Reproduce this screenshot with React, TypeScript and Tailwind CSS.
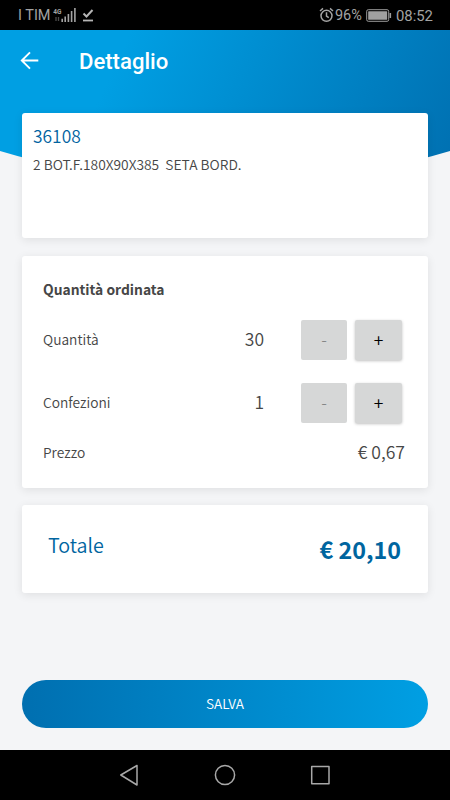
import type { ReactNode } from "react";

function StatusBar() {
  return (
    <div className="flex h-[30px] items-center bg-black pl-[18px] pr-[17px] font-['Roboto',sans-serif] text-[14.5px] font-normal leading-[30px] text-[#a3a3a3]">
      <span className="w-[35px] whitespace-nowrap pt-px">I TIM</span>
      <svg className="h-[30px] w-[44px]" viewBox="0 0 44 30" fill="none">
        <text x="0.3" y="13.8" fontSize="7.3" fontWeight="700" fill="#a3a3a3" textLength="8.2" lengthAdjust="spacingAndGlyphs">4G</text>
        <path d="M3 17v4M5.5 17v4" stroke="#4a4a4a" strokeWidth="1.3" />
        <path d="M9.2 18.8V22M12.2 16.5V22M15.4 14V22M18.6 11V22M21.9 8V22" stroke="#a3a3a3" strokeWidth="1.6" />
        <path d="M30.5 13.5l3 3 6-6.5" stroke="#b5b5b5" strokeWidth="2" />
        <path d="M30 20.5h10" stroke="#b5b5b5" strokeWidth="1.8" />
      </svg>
      <div className="ml-auto flex items-center whitespace-nowrap">
        <svg className="mr-px h-4 w-[15px]" viewBox="0 0 15 16" fill="none" stroke="#a3a3a3">
          <circle cx="7.5" cy="8.8" r="5.5" strokeWidth="1.5" />
          <path d="M7.5 5.3v3.8l2.3 1.5M1 4l3-2.6M14 4l-3-2.6" strokeWidth="1.5" />
        </svg>
        <span className="w-[31px] pt-px text-[14.5px]">96%</span>
        <svg className="mr-[4px] h-[13px] w-[26px]" viewBox="0 0 26 13">
          <rect x="0.7" y="0.7" width="22" height="11.6" rx="1.6" fill="none" stroke="#9b9b9b" />
          <rect x="2.2" y="2.2" width="19" height="8.6" rx="0.5" fill="#a0a0a0" />
          <path d="M24.3 4v5" stroke="#9b9b9b" strokeWidth="1.6" />
        </svg>
        <span className="pt-px text-[14.9px]">08:52</span>
      </div>
    </div>
  );
}

function Card({ className, children }: { className: string; children: ReactNode }) {
  return (
    <section className={`mx-[22px] rounded-[3px] bg-white shadow-[0_2px_10px_rgba(0,0,0,0.09)] ${className}`}>
      {children}
    </section>
  );
}

function QuantityRow({ label, value }: { label: string; value: string }) {
  return (
    <div className="flex h-[40px] items-center">
      <span className="w-[110px] pb-px text-[13.75px]">{label}</span>
      <span className="w-[111px] pb-px text-right text-[17.5px]">{value}</span>
      <button disabled className="ml-[37px] h-[40px] w-[46px] rounded-[2px] bg-[#d6d7d7] pb-[3px] text-[17px] font-light text-[#808181]">
        -
      </button>
      <button className="ml-2 h-[40px] w-[47px] rounded-[2px] bg-[#d6d7d7] text-[17.5px] text-black shadow-[0_1px_3px_rgba(0,0,0,0.25)]">
        +
      </button>
    </div>
  );
}

export default function App() {
  return (
    <div className="flex h-[800px] w-[450px] flex-col overflow-hidden bg-[#f4f5f7] font-['Noto_Sans_CJK_SC',sans-serif] font-[350] text-[#464646]">
      <StatusBar />

      <main className="relative flex h-[720px] flex-col">
        <div className="absolute inset-x-0 top-0 h-[160px] bg-[linear-gradient(115deg,#009fe3_25%,#006fb0_100%)] [clip-path:circle(784px_at_50%_-630px)]" />

        <div className="relative flex flex-col">
          <header className="flex h-[83px] items-start pl-[20px] pt-[21px] text-white">
            <svg className="h-[19px] w-[20px]" viewBox="0 0 20 19" fill="none" stroke="currentColor" strokeWidth="1.9">
              <path d="M18.3 9.5H2.3M10 1.3L1.8 9.5l8.2 8.2" />
            </svg>
            <h1 className="ml-[39px] mt-[-4px] font-['Roboto',sans-serif] text-[22.1px] font-medium leading-[28px]">Dettaglio</h1>
          </header>

          <Card className="h-[125px] px-[11px] pt-[11px]">
            <h2 className="text-[17.4px] leading-[24px] text-[#00639f]">36108</h2>
            <p className="mt-[4px] whitespace-pre text-[13.82px] leading-[24px]">2 BOT.F.180X90X385  SETA BORD.</p>
          </Card>

          <Card className="mt-[18px] h-[232px] pl-[21px] pr-[23px] pt-[21px]">
            <h3 className="text-[13.85px] font-bold leading-[24px]">Quantità ordinata</h3>
            <div className="mt-[19px] flex flex-col gap-[23px]">
              <QuantityRow label="Quantità" value="30" />
              <QuantityRow label="Confezioni" value="1" />
            </div>
            <div className="mt-[17px] flex h-[24px] items-center justify-between">
              <span className="text-[13.75px]">Prezzo</span>
              <span className="text-[17.6px]">€ 0,67</span>
            </div>
          </Card>

          <Card className="mt-[17px] flex h-[88px] justify-between pl-[26px] pr-[27px] text-[#00659f]">
            <span className="pt-[24px] text-[19.7px] leading-[32px]">Totale</span>
            <span className="pt-[28px] text-[23.3px] font-bold leading-[32px]">€ 20,10</span>
          </Card>

          <button className="mx-[22px] mt-[87px] h-[48px] rounded-full bg-linear-to-r from-[#006fb0] to-[#009fe3] pb-px text-[13.6px] text-white">
            SALVA
          </button>
        </div>
      </main>

      <nav className="flex h-[50px] items-center justify-center bg-black">
        <svg className="h-[50px] w-[210px]" viewBox="0 0 210 50" fill="none" stroke="#a8a8a8" strokeWidth="1.5" strokeLinejoin="round">
          <path d="M17 15.5v19.5L.8 25z" />
          <circle cx="105" cy="25" r="9.6" />
          <rect x="191.7" y="16.5" width="17.3" height="17.3" />
        </svg>
      </nav>
    </div>
  );
}
